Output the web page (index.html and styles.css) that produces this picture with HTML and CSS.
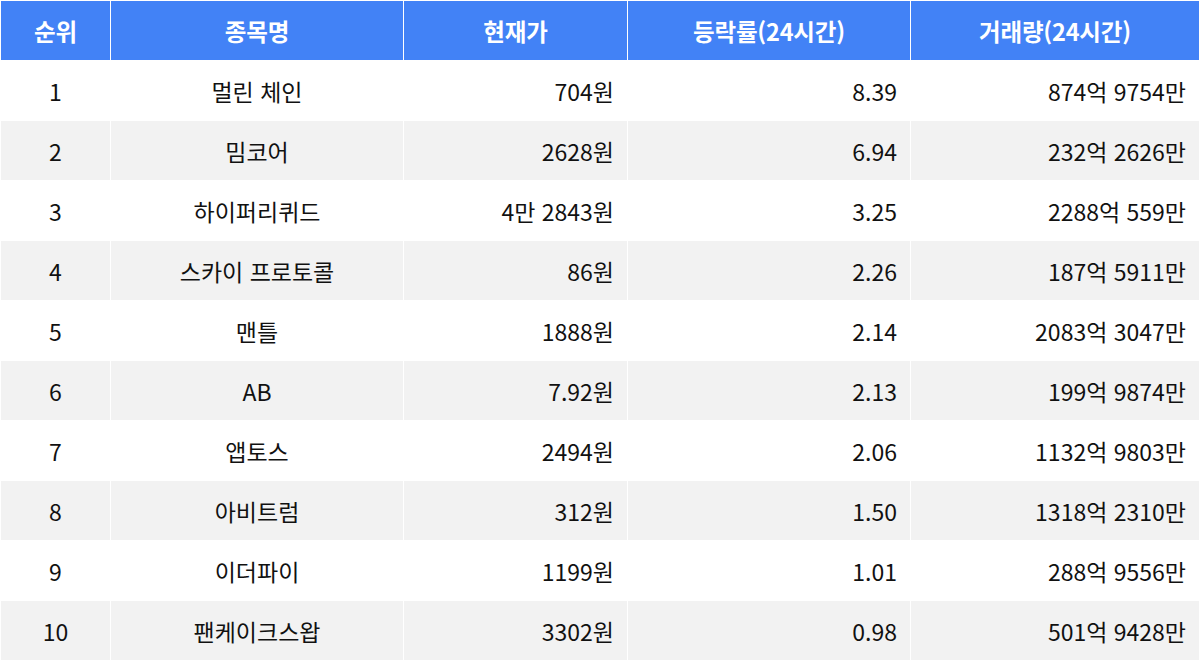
FILE: index.html
```html
<!DOCTYPE html>
<html lang="ko">
<head>
<meta charset="utf-8">
<link rel="stylesheet" href="styles.css">
</head>
<body>
<table class="rank">
  <colgroup>
    <col class="c-rank"><col class="c-name"><col class="c-price"><col class="c-rate"><col class="c-vol">
  </colgroup>
  <thead>
    <tr><th>순위</th><th>종목명</th><th>현재가</th><th>등락률(24시간)</th><th>거래량(24시간)</th></tr>
  </thead>
  <tbody>
    <tr><td class="ctr">1</td><td class="ctr">멀린 체인</td><td class="num">704원</td><td class="num">8.39</td><td class="num">874억 9754만</td></tr>
    <tr><td class="ctr">2</td><td class="ctr">밈코어</td><td class="num">2628원</td><td class="num">6.94</td><td class="num">232억 2626만</td></tr>
    <tr><td class="ctr">3</td><td class="ctr">하이퍼리퀴드</td><td class="num">4만 2843원</td><td class="num">3.25</td><td class="num">2288억 559만</td></tr>
    <tr><td class="ctr">4</td><td class="ctr">스카이 프로토콜</td><td class="num">86원</td><td class="num">2.26</td><td class="num">187억 5911만</td></tr>
    <tr><td class="ctr">5</td><td class="ctr">맨틀</td><td class="num">1888원</td><td class="num">2.14</td><td class="num">2083억 3047만</td></tr>
    <tr><td class="ctr">6</td><td class="ctr">AB</td><td class="num">7.92원</td><td class="num">2.13</td><td class="num">199억 9874만</td></tr>
    <tr><td class="ctr">7</td><td class="ctr">앱토스</td><td class="num">2494원</td><td class="num">2.06</td><td class="num">1132억 9803만</td></tr>
    <tr><td class="ctr">8</td><td class="ctr">아비트럼</td><td class="num">312원</td><td class="num">1.50</td><td class="num">1318억 2310만</td></tr>
    <tr><td class="ctr">9</td><td class="ctr">이더파이</td><td class="num">1199원</td><td class="num">1.01</td><td class="num">288억 9556만</td></tr>
    <tr><td class="ctr">10</td><td class="ctr">팬케이크스왑</td><td class="num">3302원</td><td class="num">0.98</td><td class="num">501억 9428만</td></tr>
  </tbody>
</table>
</body>
</html>
```
FILE: styles.css
```css
html, body {
  margin: 0;
  padding: 0;
  background: #ffffff;
}
body {
  font-family: "Noto Sans CJK KR", "Noto Sans", sans-serif;
  color: #111111;
}
.rank {
  width: 1200px;
  border-collapse: separate;
  border-spacing: 1px;
  table-layout: fixed;
}
.c-rank { width: 109px; }
.c-name { width: 292px; }
.c-price { width: 223px; }
.c-rate { width: 282px; }
.c-vol { width: 288px; }
.rank th {
  height: 59px;
  padding: 0;
  background: #4282f6;
  color: #ffffff;
  font-size: 23.5px;
  font-weight: 700;
  text-align: center;
  vertical-align: middle;
  letter-spacing: -0.2px;
}
.rank td {
  height: 59px;
  padding: 0 13px;
  font-size: 23px;
  font-weight: 400;
  vertical-align: middle;
}
.rank tbody tr:nth-child(even) td {
  background: #f2f2f2;
}
.ctr { text-align: center; }
.num { text-align: right; }
```
